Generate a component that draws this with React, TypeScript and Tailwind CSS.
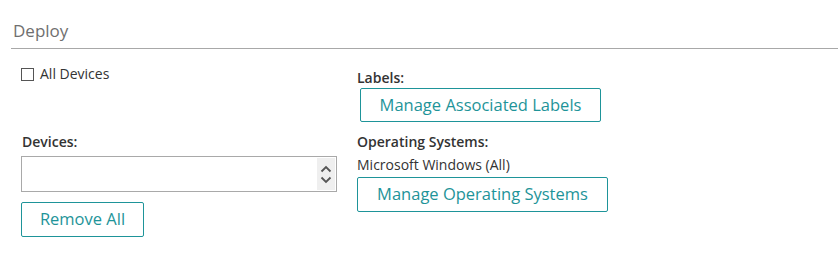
import React from "react";

export default function App() {
  return (
    <div className="w-[838px] h-[262px] bg-white font-['Open_Sans',sans-serif] text-[14px] text-[#333]">
      <div className="pl-[11px] pt-[20px]">
        <div className="pl-[2px] text-[17px] leading-[22px] text-[#6f6f6f] pb-[6px] border-b border-[#a8a8a8]">Deploy</div>
      </div>
      <div className="flex pl-[21px] pt-[15px]">
        <div className="w-[336px] flex flex-col">
          <label className="flex items-center h-[20px] gap-[6px]">
            <span className="w-[13px] h-[13px] border border-[#555] bg-white" />
            <span className="leading-[20px] text-[#333]">All Devices</span>
          </label>
          <div className="mt-[48px] pl-[1px] font-semibold text-[#333] leading-[20px]">Devices:</div>
          <div className="mt-[4px] w-[316px] h-[36px] border border-[#a9a9a9] flex justify-end p-[1px]">
            <div className="w-[18px] h-full bg-[#efefef] flex flex-col items-center justify-center gap-[3px]">
              <svg width="12" height="8" viewBox="0 0 12 8"><path d="M1.5 6.5 L6 2 L10.5 6.5" fill="none" stroke="#555" strokeWidth="1.8" /></svg>
              <svg width="12" height="8" viewBox="0 0 12 8"><path d="M1.5 1.5 L6 6 L10.5 1.5" fill="none" stroke="#555" strokeWidth="1.8" /></svg>
            </div>
          </div>
          <button className="mt-[10px] w-[123px] h-[35px] border border-[#1e9499] rounded-[2px] text-[#1e9499] text-[16.5px] bg-white">Remove All</button>
        </div>
        <div className="flex flex-col">
          <div className="mt-[4px] font-semibold leading-[20px]">Labels:</div>
          <button className="ml-[3px] w-[241px] h-[34px] border border-[#1e9499] rounded-[2px] text-[#1e9499] text-[16.5px] bg-white">Manage Associated Labels</button>
          <div className="mt-[10px] font-semibold leading-[20px]">Operating Systems:</div>
          <div className="mt-[3px] leading-[20px]">Microsoft Windows (All)</div>
          <button className="mt-[2px] w-[251px] h-[35px] border border-[#1e9499] rounded-[2px] text-[#1e9499] text-[16.5px] bg-white">Manage Operating Systems</button>
        </div>
      </div>
    </div>
  );
}
